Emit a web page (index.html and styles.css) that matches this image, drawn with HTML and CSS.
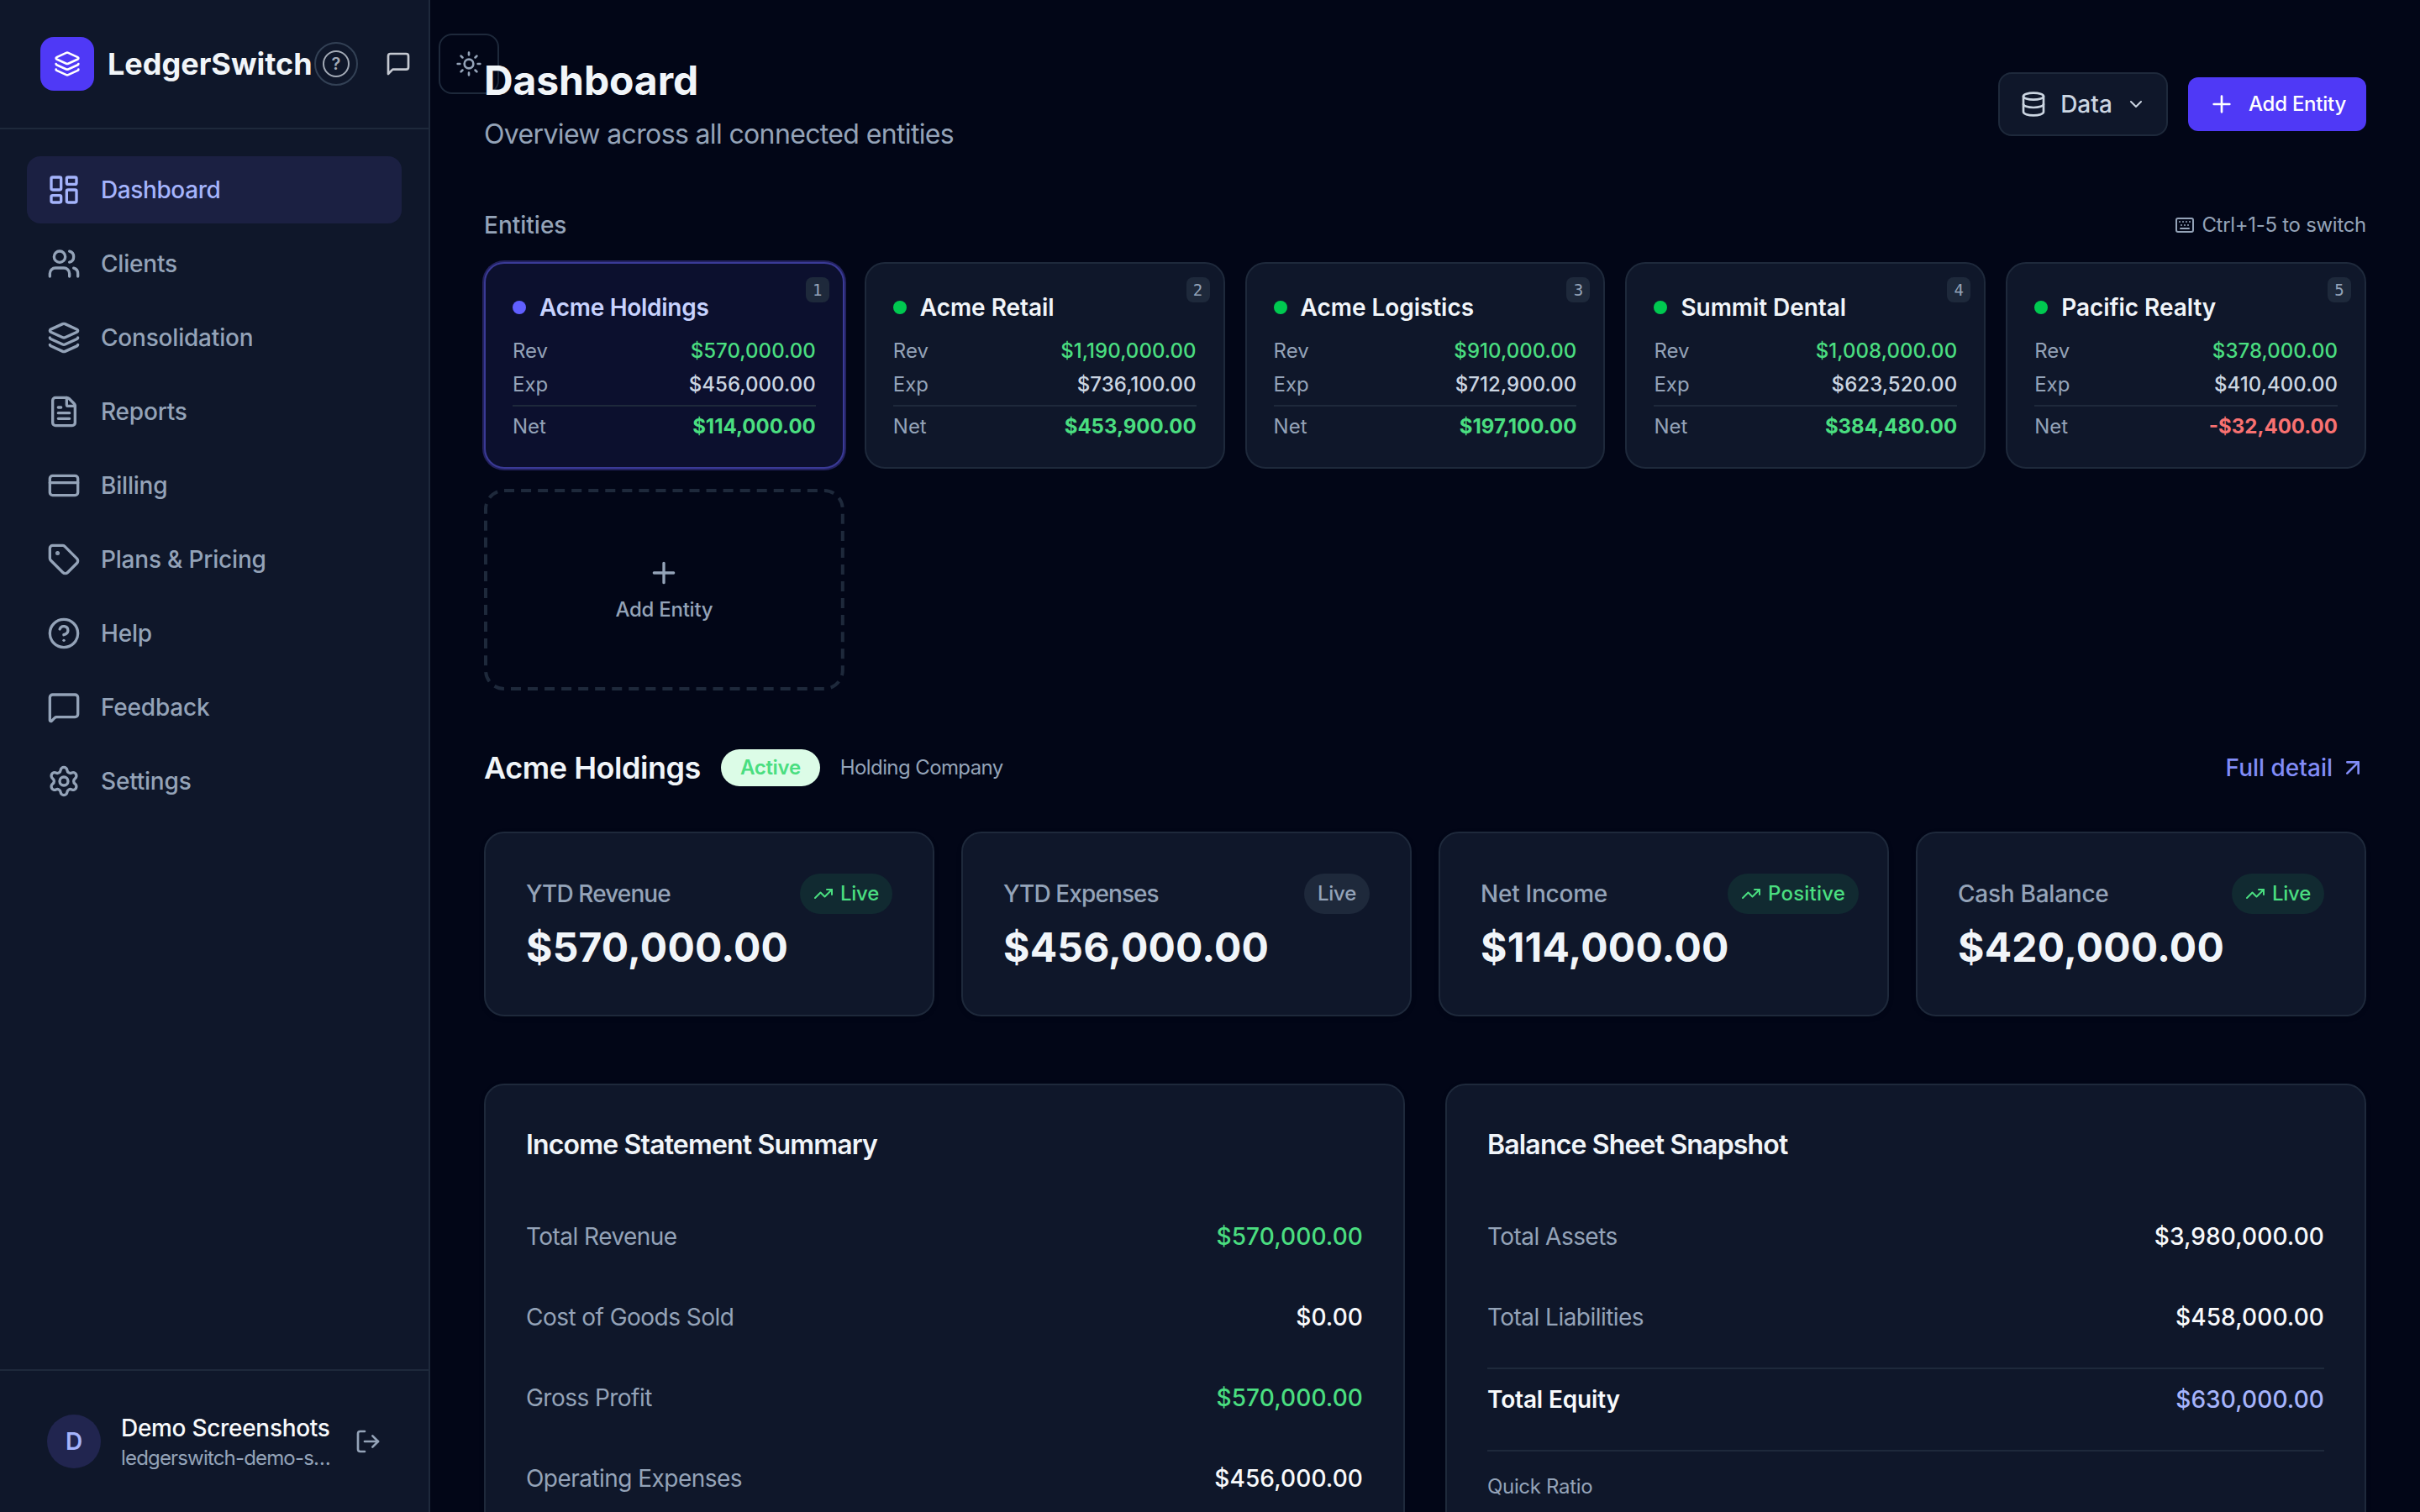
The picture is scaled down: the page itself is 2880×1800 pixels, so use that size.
FILE: index.html
```html
<!DOCTYPE html>
<html lang="en">
<head>
    <meta charset="UTF-8">
    <meta name="viewport" content="width=device-width, initial-scale=1.0">
    <title>LedgerSwitch - Dashboard</title>
    <link rel="stylesheet" href="styles.css">
</head>
<body>
    <!-- shared icons -->
    <svg class="icon-defs">
        <symbol id="i-layers" viewBox="0 0 24 24"><path d="M12.83 2.18a2 2 0 0 0-1.66 0L2.6 6.08a1 1 0 0 0 0 1.83l8.58 3.91a2 2 0 0 0 1.66 0l8.58-3.9a1 1 0 0 0 0-1.83z"/><path d="M2 12a1 1 0 0 0 .58.91l8.6 3.91a2 2 0 0 0 1.65 0l8.58-3.9A1 1 0 0 0 22 12"/><path d="M2 17a1 1 0 0 0 .58.91l8.6 3.91a2 2 0 0 0 1.65 0l8.58-3.9A1 1 0 0 0 22 17"/></symbol>
        <symbol id="i-plus" viewBox="0 0 24 24"><path d="M5 12h14M12 5v14"/></symbol>
        <symbol id="i-trend" viewBox="0 0 24 24"><path d="M16 7h6v6"/><path d="m22 7-8.5 8.5-5-5L2 17"/></symbol>
    </svg>

    <div class="app">
        <aside class="sidebar">
            <div class="brand">
                <div class="brand-logo"><svg class="icon i32"><use href="#i-layers"/></svg></div>
                <span class="brand-name">LedgerSwitch</span>
                <div class="brand-actions">
                    <button class="help-btn"><span class="help-mark">?</span></button>
                    <button class="square-btn"><svg class="icon i32" viewBox="0 0 24 24"><path d="M21 15a2 2 0 0 1-2 2H7l-4 4V5a2 2 0 0 1 2-2h14a2 2 0 0 1 2 2z"/></svg></button>
                    <button class="square-btn theme-btn"><svg class="icon i32" viewBox="0 0 24 24"><circle cx="12" cy="12" r="4"/><path d="M12 2v2M12 20v2M4.93 4.93l1.41 1.41M17.66 17.66l1.41 1.41M2 12h2M20 12h2M6.34 17.66l-1.41 1.41M19.07 4.93l-1.41 1.41"/></svg></button>
                </div>
            </div>

            <nav class="nav">
                <a class="nav-item active"><svg class="icon i40" viewBox="0 0 24 24"><rect width="7" height="9" x="3" y="3" rx="1"/><rect width="7" height="5" x="14" y="3" rx="1"/><rect width="7" height="9" x="14" y="12" rx="1"/><rect width="7" height="5" x="3" y="16" rx="1"/></svg>Dashboard</a>
                <a class="nav-item"><svg class="icon i40" viewBox="0 0 24 24"><path d="M16 21v-2a4 4 0 0 0-4-4H6a4 4 0 0 0-4 4v2"/><path d="M16 3.128a4 4 0 0 1 0 7.744"/><path d="M22 21v-2a4 4 0 0 0-3-3.87"/><circle cx="9" cy="7" r="4"/></svg>Clients</a>
                <a class="nav-item"><svg class="icon i40"><use href="#i-layers"/></svg>Consolidation</a>
                <a class="nav-item"><svg class="icon i40" viewBox="0 0 24 24"><path d="M6 22a2 2 0 0 1-2-2V4a2 2 0 0 1 2-2h8a2.4 2.4 0 0 1 1.704.706l3.588 3.588A2.4 2.4 0 0 1 20 8v12a2 2 0 0 1-2 2z"/><path d="M14 2v5a1 1 0 0 0 1 1h5"/><path d="M10 9H8M16 13H8M16 17H8"/></svg>Reports</a>
                <a class="nav-item"><svg class="icon i40" viewBox="0 0 24 24"><rect width="20" height="14" x="2" y="5" rx="2"/><path d="M2 10h20"/></svg>Billing</a>
                <a class="nav-item"><svg class="icon i40" viewBox="0 0 24 24"><path d="M12.586 2.586A2 2 0 0 0 11.172 2H4a2 2 0 0 0-2 2v7.172a2 2 0 0 0 .586 1.414l8.704 8.704a2.426 2.426 0 0 0 3.42 0l6.58-6.58a2.426 2.426 0 0 0 0-3.42z"/><circle cx="7.5" cy="7.5" r=".5" fill="currentColor"/></svg>Plans &amp; Pricing</a>
                <a class="nav-item"><svg class="icon i40" viewBox="0 0 24 24"><circle cx="12" cy="12" r="10"/><path d="M9.09 9a3 3 0 0 1 5.83 1c0 2-3 3-3 3"/><path d="M12 17h.01"/></svg>Help</a>
                <a class="nav-item"><svg class="icon i40" viewBox="0 0 24 24"><path d="M22 17a2 2 0 0 1-2 2H6.828a2 2 0 0 0-1.414.586l-2.202 2.202A.71.71 0 0 1 2 21.286V5a2 2 0 0 1 2-2h16a2 2 0 0 1 2 2z"/></svg>Feedback</a>
                <a class="nav-item"><svg class="icon i40" viewBox="0 0 24 24"><path d="M9.671 4.136a2.34 2.34 0 0 1 4.659 0 2.34 2.34 0 0 0 3.319 1.915 2.34 2.34 0 0 1 2.33 4.033 2.34 2.34 0 0 0 0 3.831 2.34 2.34 0 0 1-2.33 4.033 2.34 2.34 0 0 0-3.319 1.915 2.34 2.34 0 0 1-4.659 0 2.34 2.34 0 0 0-3.32-1.915 2.34 2.34 0 0 1-2.33-4.033 2.34 2.34 0 0 0 0-3.831A2.34 2.34 0 0 1 6.35 6.051a2.34 2.34 0 0 0 3.319-1.915"/><circle cx="12" cy="12" r="3"/></svg>Settings</a>
            </nav>

            <div class="user">
                <div class="avatar">D</div>
                <div class="user-info">
                    <div class="user-name">Demo Screenshots</div>
                    <div class="user-mail">ledgerswitch-demo-s…</div>
                </div>
                <svg class="icon i32" viewBox="0 0 24 24"><path d="m16 17 5-5-5-5"/><path d="M21 12H9"/><path d="M9 21H5a2 2 0 0 1-2-2V5a2 2 0 0 1 2-2h4"/></svg>
            </div>
        </aside>

        <main class="main">
            <header class="page-header">
                <div>
                    <h1>Dashboard</h1>
                    <p class="subtitle">Overview across all connected entities</p>
                </div>
                <div class="header-actions">
                    <button class="data-btn">
                        <svg class="icon i32" viewBox="0 0 24 24"><ellipse cx="12" cy="5" rx="9" ry="3"/><path d="M3 5v14a9 3 0 0 0 18 0V5"/><path d="M3 12a9 3 0 0 0 18 0"/></svg>
                        <span>Data</span>
                        <svg class="icon i24" viewBox="0 0 24 24"><path d="m6 9 6 6 6-6"/></svg>
                    </button>
                    <button class="add-btn"><svg class="icon i32"><use href="#i-plus"/></svg><span>Add Entity</span></button>
                </div>
            </header>

            <div class="section-bar">
                <h2 class="section-label">Entities</h2>
                <div class="hint"><svg class="icon i24" viewBox="0 0 24 24"><rect width="20" height="16" x="2" y="4" rx="2"/><path d="M6 8h.01M10 8h.01M14 8h.01M18 8h.01M8 12h.01M12 12h.01M16 12h.01M7 16h10"/></svg><span>Ctrl+1-5 to switch</span></div>
            </div>

            <div class="entities">
                <div class="entity selected">
                    <kbd>1</kbd>
                    <div class="entity-name"><i></i>Acme Holdings</div>
                    <div class="line"><span>Rev</span><b class="green">$570,000.00</b></div>
                    <div class="line"><span>Exp</span><b>$456,000.00</b></div>
                    <div class="line net"><span>Net</span><b class="green">$114,000.00</b></div>
                </div>
                <div class="entity">
                    <kbd>2</kbd>
                    <div class="entity-name"><i></i>Acme Retail</div>
                    <div class="line"><span>Rev</span><b class="green">$1,190,000.00</b></div>
                    <div class="line"><span>Exp</span><b>$736,100.00</b></div>
                    <div class="line net"><span>Net</span><b class="green">$453,900.00</b></div>
                </div>
                <div class="entity">
                    <kbd>3</kbd>
                    <div class="entity-name"><i></i>Acme Logistics</div>
                    <div class="line"><span>Rev</span><b class="green">$910,000.00</b></div>
                    <div class="line"><span>Exp</span><b>$712,900.00</b></div>
                    <div class="line net"><span>Net</span><b class="green">$197,100.00</b></div>
                </div>
                <div class="entity">
                    <kbd>4</kbd>
                    <div class="entity-name"><i></i>Summit Dental</div>
                    <div class="line"><span>Rev</span><b class="green">$1,008,000.00</b></div>
                    <div class="line"><span>Exp</span><b>$623,520.00</b></div>
                    <div class="line net"><span>Net</span><b class="green">$384,480.00</b></div>
                </div>
                <div class="entity">
                    <kbd>5</kbd>
                    <div class="entity-name"><i></i>Pacific Realty</div>
                    <div class="line"><span>Rev</span><b class="green">$378,000.00</b></div>
                    <div class="line"><span>Exp</span><b>$410,400.00</b></div>
                    <div class="line net"><span>Net</span><b class="red">-$32,400.00</b></div>
                </div>
                <div class="entity-add">
                    <svg class="dashes"><rect x="2" y="2" width="424.8" height="236" rx="22" pathLength="1280"/></svg>
                    <svg class="icon i40"><use href="#i-plus"/></svg>
                    <span>Add Entity</span>
                </div>
            </div>

            <div class="detail-bar">
                <h2>Acme Holdings</h2>
                <span class="status">Active</span>
                <span class="kind">Holding Company</span>
                <a class="detail-link">Full detail<svg class="icon i32" viewBox="0 0 24 24"><path d="M7 7h10v10"/><path d="M7 17 17 7"/></svg></a>
            </div>

            <div class="kpis">
                <div class="kpi">
                    <div class="kpi-top"><span class="ytd">YTD Revenue</span><em class="up"><svg class="icon i24"><use href="#i-trend"/></svg>Live</em></div>
                    <div class="kpi-value">$570,000.00</div>
                </div>
                <div class="kpi">
                    <div class="kpi-top"><span class="ytd">YTD Expenses</span><em>Live</em></div>
                    <div class="kpi-value">$456,000.00</div>
                </div>
                <div class="kpi">
                    <div class="kpi-top"><span>Net Income</span><em class="up wide"><svg class="icon i24"><use href="#i-trend"/></svg>Positive</em></div>
                    <div class="kpi-value">$114,000.00</div>
                </div>
                <div class="kpi">
                    <div class="kpi-top"><span>Cash Balance</span><em class="up"><svg class="icon i24"><use href="#i-trend"/></svg>Live</em></div>
                    <div class="kpi-value">$420,000.00</div>
                </div>
            </div>

            <div class="panels">
                <section class="panel">
                    <h3>Income Statement Summary</h3>
                    <div class="row"><span>Total Revenue</span><b class="green">$570,000.00</b></div>
                    <div class="row"><span>Cost of Goods Sold</span><b>$0.00</b></div>
                    <div class="row"><span>Gross Profit</span><b class="green">$570,000.00</b></div>
                    <div class="row"><span>Operating Expenses</span><b>$456,000.00</b></div>
                </section>
                <section class="panel">
                    <h3>Balance Sheet Snapshot</h3>
                    <div class="row"><span>Total Assets</span><b>$3,980,000.00</b></div>
                    <div class="row"><span>Total Liabilities</span><b>$458,000.00</b></div>
                    <div class="row total"><span>Total Equity</span><b class="indigo">$630,000.00</b></div>
                    <div class="ratio">Quick Ratio</div>
                </section>
            </div>
        </main>
    </div>
</body>
</html>
```
FILE: styles.css
```css
* {
    box-sizing: border-box;
}
body {
    margin: 0;
    height: 1800px;
    overflow: hidden;
    background: #020617;
    color: #f1f5f9;
    font-family: Inter, "Liberation Sans", sans-serif;
    font-size: 28px;
    line-height: 40px;
}
h1, h2, h3, p {
    margin: 0;
}
button {
    font: inherit;
    background: none;
    border: 0;
    padding: 0;
}
b, i, em {
    font-weight: inherit;
    font-style: normal;
}
.icon-defs {
    display: none;
}
.icon {
    flex: none;
    display: block;
    fill: none;
    stroke: currentColor;
    stroke-width: 2;
    stroke-linecap: round;
    stroke-linejoin: round;
}
.i24 { width: 24px; height: 24px; }
.i32 { width: 32px; height: 32px; }
.i40 { width: 40px; height: 40px; }
.green { color: #4ade80; }
.red { color: #f87171; }
.indigo { color: #a5b4fc; }

.app {
    display: flex;
    height: 1800px;
    overflow: hidden;
}

/* sidebar */
.sidebar {
    flex: none;
    width: 512px;
    display: flex;
    flex-direction: column;
    background: #0f172a;
    border-right: 2px solid #1e293b;
}
.brand {
    flex: none;
    display: flex;
    align-items: center;
    height: 154px;
    padding-left: 48px;
    border-bottom: 2px solid #1e293b;
}
.brand-logo {
    flex: none;
    display: flex;
    align-items: center;
    justify-content: center;
    width: 64px;
    height: 64px;
    margin-right: 16px;
    border-radius: 16px;
    background: #4f39f6;
    color: #fff;
}
.brand-name {
    flex: none;
    width: 246px;
    font-size: 36px;
    font-weight: 700;
    white-space: nowrap;
}
.brand-actions {
    flex: none;
    display: flex;
    align-items: center;
    gap: 12px;
}
.help-btn {
    display: flex;
    align-items: center;
    justify-content: center;
    width: 52px;
    height: 52px;
    border: 2px solid #334155;
    border-radius: 50%;
}
.help-mark {
    width: 32px;
    height: 32px;
    border: 2px solid #a3aab6;
    border-radius: 50%;
    color: #a3aab6;
    font-size: 20px;
    font-weight: 600;
    line-height: 28px;
    text-align: center;
}
.square-btn {
    flex: none;
    display: flex;
    align-items: center;
    justify-content: center;
    width: 72px;
    height: 72px;
    color: #c5c9d1;
}
.theme-btn {
    border: 2px solid #1e293b;
    border-radius: 16px;
    color: #94a3b8;
}
.nav {
    flex: 1;
    display: flex;
    flex-direction: column;
    gap: 8px;
    padding: 32px;
}
.nav-item {
    display: flex;
    align-items: center;
    gap: 24px;
    height: 80px;
    padding: 0 24px;
    border-radius: 16px;
    color: #94a3b8;
    font-weight: 500;
    letter-spacing: -0.2px;
}
.nav-item.active {
    background: #1b2042;
    color: #a5b4fc;
    letter-spacing: -0.4px;
}
.user {
    flex: none;
    display: flex;
    align-items: center;
    gap: 24px;
    height: 170px;
    padding: 0 56px;
    border-top: 2px solid #1e293b;
    color: #94a3b8;
}
.avatar {
    flex: none;
    width: 64px;
    height: 64px;
    border-radius: 50%;
    background: #21254f;
    color: #a5b4fc;
    font-weight: 600;
    line-height: 64px;
    text-align: center;
}
.user-info {
    flex: 1;
    min-width: 0;
    white-space: nowrap;
}
.user-name {
    color: #f8fafc;
    font-weight: 500;
    letter-spacing: -0.3px;
}
.user-mail {
    font-size: 24px;
    line-height: 32px;
    letter-spacing: -0.83px;
}

/* page */
.main {
    flex: 1;
    position: relative;
    padding: 64px;
}
.page-header {
    display: flex;
    align-items: center;
    justify-content: space-between;
    height: 120px;
}
.page-header h1 {
    font-size: 48px;
    line-height: 64px;
    font-weight: 700;
    letter-spacing: -0.1px;
}
.subtitle {
    margin-top: 8px;
    color: #94a3b8;
    font-size: 32px;
    line-height: 48px;
    letter-spacing: -0.64px;
}
.header-actions {
    display: flex;
    align-items: center;
    gap: 24px;
}
.data-btn, .add-btn {
    display: flex;
    align-items: center;
    gap: 16px;
    font-weight: 500;
}
.data-btn {
    height: 76px;
    padding: 0 24px;
    border: 2px solid #1e293b;
    border-radius: 16px;
    background: #0f172a;
    color: #cbd5e1;
}
.data-btn span {
    width: 62px;
}
.add-btn {
    height: 64px;
    padding: 0 24px;
    border-radius: 12px;
    background: #4f39f6;
    color: #fff;
    font-size: 24px;
    letter-spacing: -0.25px;
}
.section-bar {
    display: flex;
    align-items: center;
    justify-content: space-between;
    height: 40px;
    margin: 64px 0 24px;
    color: #94a3b8;
}
.section-label {
    font-size: 28px;
    font-weight: 500;
}
.hint {
    display: flex;
    align-items: center;
    gap: 8px;
    font-size: 24px;
    letter-spacing: -0.3px;
}

/* entity cards */
.entities {
    display: grid;
    grid-template-columns: repeat(5, 1fr);
    gap: 24px;
}
.entity {
    position: relative;
    padding: 32px;
    border: 2px solid #1e293b;
    border-radius: 24px;
    background: #0f172a;
}
.entity.selected {
    border-color: #3a3a96;
    background: #0c102e;
    box-shadow: 0 0 0 2px #23225f;
}
.entity kbd {
    position: absolute;
    top: 16px;
    right: 16px;
    width: 28px;
    height: 30px;
    border-radius: 8px;
    background: #1e293b;
    color: #94a3b8;
    font: 19px/30px "DejaVu Sans Mono", monospace;
    text-align: center;
}
.entity-name {
    display: flex;
    align-items: center;
    gap: 16px;
    margin-bottom: 16px;
    font-weight: 600;
    letter-spacing: -0.05px;
}
.entity-name i {
    width: 16px;
    height: 16px;
    border-radius: 50%;
    background: #00c950;
}
.selected .entity-name {
    color: #c7d2fe;
    letter-spacing: -0.28px;
}
.selected .entity-name i {
    background: #615fff;
}
.line {
    display: flex;
    justify-content: space-between;
    margin-bottom: 8px;
    color: #94a3b8;
    font-size: 24px;
    line-height: 32px;
}
.line b {
    font-weight: 500;
    letter-spacing: 0.05px;
}
.line b:not([class]) {
    color: #cbd5e1;
}
.line.net {
    margin-bottom: 0;
    padding-top: 8px;
    border-top: 2px solid #1e293b;
}
.line.net b {
    font-weight: 700;
    letter-spacing: 0;
}
.entity-add {
    position: relative;
    display: flex;
    flex-direction: column;
    align-items: center;
    justify-content: center;
    gap: 8px;
    height: 240px;
    color: #94a3b8;
    font-size: 24px;
    font-weight: 500;
    line-height: 32px;
    letter-spacing: -0.25px;
}
.dashes {
    position: absolute;
    inset: 0;
    width: 100%;
    height: 100%;
    fill: none;
    stroke: #1e293b;
    stroke-width: 4;
    stroke-dasharray: 12 8;
}

/* selected entity */
.detail-bar {
    display: flex;
    align-items: center;
    gap: 24px;
    height: 56px;
    margin: 64px 0 48px;
}
.detail-bar h2 {
    font-size: 36px;
    font-weight: 600;
    letter-spacing: -0.45px;
}
.status {
    height: 44px;
    padding: 0 23px;
    border-radius: 22px;
    background: #dcfce7;
    color: #4ade80;
    font-size: 24px;
    font-weight: 600;
    line-height: 44px;
    letter-spacing: -0.3px;
}
.kind {
    color: #94a3b8;
    font-size: 24px;
    letter-spacing: -0.6px;
}
.detail-link {
    display: flex;
    align-items: center;
    gap: 8px;
    margin-left: auto;
    color: #818cf8;
    font-weight: 500;
}
.kpis {
    display: grid;
    grid-template-columns: repeat(4, 1fr);
    gap: 32px;
}
.kpi, .panel {
    padding: 48px;
    border: 2px solid #1e293b;
    border-radius: 24px;
    background: #0f172a;
    box-shadow: 0 2px 6px rgba(0, 0, 0, 0.1);
}
.kpi-top {
    display: flex;
    align-items: center;
    justify-content: space-between;
    height: 48px;
    margin-bottom: 8px;
    color: #94a3b8;
    font-weight: 500;
    letter-spacing: -0.25px;
}
.ytd {
    letter-spacing: -0.9px;
}
.kpi-top em {
    display: flex;
    align-items: center;
    gap: 8px;
    height: 48px;
    padding: 0 16px;
    border-radius: 24px;
    background: #1e293b;
    font-size: 24px;
}
.kpi-top em.up {
    background: #112a31;
    color: #4ade80;
}
/* longer badge hangs over the card padding a little */
.kpi-top em.wide {
    margin-right: -14px;
    letter-spacing: 0.2px;
}
.kpi-value {
    font-size: 48px;
    font-weight: 700;
    line-height: 64px;
    letter-spacing: 0.2px;
}
.panels {
    display: grid;
    grid-template-columns: repeat(2, 1fr);
    gap: 48px;
    margin-top: 80px;
}
.panel {
    height: 700px;
}
.panel h3 {
    margin-bottom: 50px;
    font-size: 32px;
    font-weight: 600;
    line-height: 46px;
    letter-spacing: -0.026em;
}
.row {
    display: flex;
    justify-content: space-between;
    margin-bottom: 24px;
    padding: 16px 0;
    color: #94a3b8;
    letter-spacing: -0.54px;
}
.row b {
    font-weight: 500;
    letter-spacing: 0.1px;
}
.row b:not([class]) {
    color: #f8fafc;
}
.row.total {
    border-top: 2px solid #1e293b;
}
.row.total span {
    color: #f8fafc;
    font-weight: 600;
    letter-spacing: -0.15px;
}
.ratio {
    padding-top: 26px;
    border-top: 2px solid #1e293b;
    color: #94a3b8;
    font-size: 24px;
    line-height: 32px;
    letter-spacing: -0.33px;
}
```
